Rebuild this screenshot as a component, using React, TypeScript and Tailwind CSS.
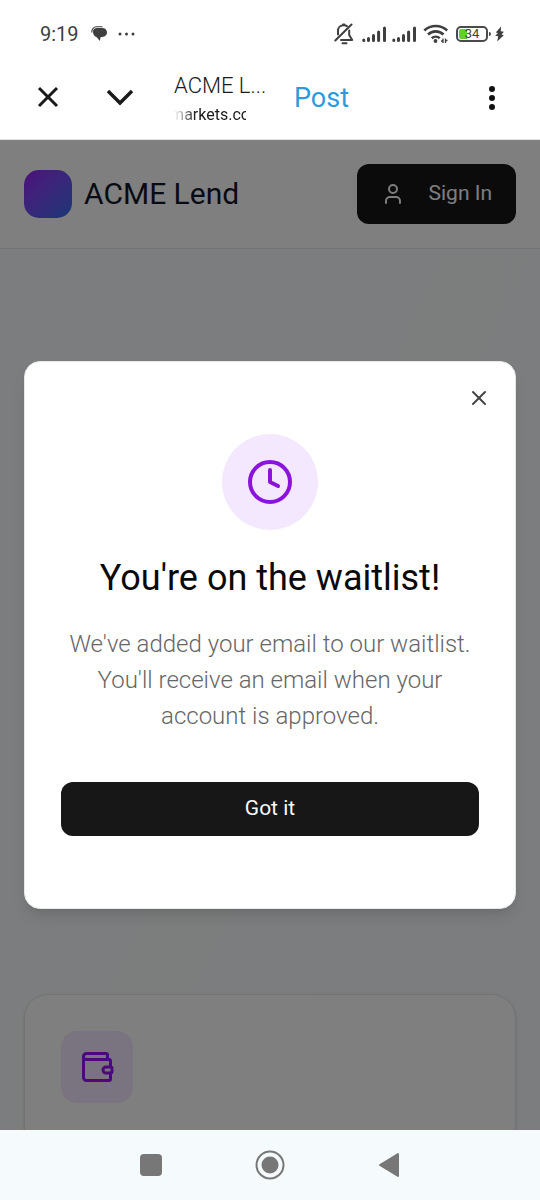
import { ChevronDown, Clock, User, Wallet, X } from 'lucide-react';

function SignalBars() {
  return (
    <svg width="25" height="16" viewBox="0 0 25 16" stroke="#3f3f3f" strokeWidth="3" strokeLinecap="round" aria-hidden="true">
      <path d="M1.8 14v.5M6.5 12.5v2M11.500 9.5v5M16.600 6v8.5M22.500 2v12.5" />
    </svg>
  );
}

function StatusBar() {
  return (
    <div className="flex h-[68px] items-center justify-between pl-10 pr-9 text-[#3f3f3f]">
      <div className="flex items-center">
        <span className="text-[20px] leading-6">9:19</span>
        <svg className="ml-3" width="17" height="16" viewBox="0 0 17 16" aria-hidden="true">
          <path d="M2 5.500C2 3.400 3.600 2 6 2h5.500a4.500 4.500 0 0 1 4.500 4.500c0 2.500-1.700 4.300-4.700 4.600H9.600L8.800 15 5.800 11.200C3.500 10.600 2 8.500 2 6z" fill="#3f3f3f" />
          <path d="M.7 6.500C.7 2.800 2.800.8 5.500.8h6" fill="none" stroke="#3f3f3f" strokeWidth="1.1" />
        </svg>
        <svg className="ml-2.5" width="17" height="4" viewBox="0 0 17 4" fill="#3f3f3f" aria-hidden="true">
          <circle cx="2" cy="2" r="1.5" /><circle cx="8.5" cy="2" r="1.5" /><circle cx="15" cy="2" r="1.5" />
        </svg>
      </div>
      <div className="flex items-center">
        <svg width="20" height="22" viewBox="0 0 20 22" fill="none" stroke="#3f3f3f" strokeWidth="2" strokeLinecap="round" strokeLinejoin="round" aria-hidden="true">
          <path d="M1.300 17.500 17.500 1.500" />
          <path d="M4 11.500V8a5.500 5.500 0 0 1 5-5.700V1.500h1.300v.8c1 .1 1.800.4 2.600.9" />
          <path d="M15.200 7.500v4.500l3 5H7" />
          <path d="M8.500 20.200h4" />
        </svg>
        <div className="ml-2 flex gap-[5px]">
          <SignalBars />
          <SignalBars />
        </div>
        <svg className="ml-1.5" width="26" height="20" viewBox="0 0 26 20" fill="none" stroke="#3f3f3f" strokeWidth="2.6" aria-hidden="true">
          <path d="M1.300 6.500C7.800.5 17.700.5 24.200 6.500M5 10.500c4.400-4.200 11-4.200 15.500 0M8.800 14.300c2.200-2.100 5.600-2.100 7.900 0" />
          <circle cx="12.500" cy="17" r="1.900" fill="#3f3f3f" stroke="none" />
          <path d="M20 19v-4.500M22.500 14.500V19M18 17h2M22.500 16.500h2" strokeWidth="1.300" />
        </svg>
        <div className="relative ml-[7px] h-4 w-8 rounded-[5px] border-2 border-[#4a4a4a] p-px">
          <div className="h-full w-2 rounded-l-[2px] bg-[#62d02a]" />
          <span className="absolute inset-0 text-center text-[13px] leading-3">34</span>
        </div>
        <div className="ml-px h-1 w-0.5 rounded-r bg-[#4a4a4a]" />
        <svg className="ml-1" width="9" height="16" viewBox="0 0 9 16" fill="#3f3f3f" aria-hidden="true">
          <path d="M6 .5.800 6.500 3 7 .200 9.800l3 .4L2.200 15.500 8.800 9.200 6.500 8.600 8.900 5.800 5.800 5.300z" />
        </svg>
      </div>
    </div>
  );
}

function BrowserBar() {
  return (
    <div className="flex h-[72px] items-start border-b border-[#dfe3e3] pl-[30px] pr-8 text-[#1a1a1a]">
      <button aria-label="Close tab" className="mt-[11px]">
        <X size={36} strokeWidth={2} strokeLinecap="butt" />
      </button>
      <button aria-label="Minimize" className="ml-[30px] mt-[5px]">
        <ChevronDown size={48} strokeWidth={1.75} strokeLinecap="butt" strokeLinejoin="miter" />
      </button>
      <div className="ml-[30px] w-24 shrink-0 pt-1">
        <p className="whitespace-nowrap text-[22px] font-light leading-7">ACME L...</p>
        <div className="flex w-[72px] justify-center overflow-hidden whitespace-nowrap text-[16px] leading-[30px] mask-l-from-70% mask-l-to-100%">
          <span>markets.co</span>
        </div>
      </div>
      <button className="ml-6 mt-[14px] text-[27px] leading-8 text-[#2b9be0]">Post</button>
      <button aria-label="More options" className="ml-auto mt-[17px] px-3">
        <svg width="8" height="26" viewBox="0 0 8 26" fill="#111">
          <circle cx="4" cy="4" r="3" /><circle cx="4" cy="13" r="3" /><circle cx="4" cy="22" r="3" />
        </svg>
      </button>
    </div>
  );
}

function Page() {
  return (
    <div className="bg-gradient-to-br from-slate-50 via-gray-50 to-slate-50">
      <header className="flex items-center justify-between border-b border-[#e5e7eb] bg-white p-6">
        <div className="flex items-center gap-3">
          <div className="size-12 rounded-[15px] bg-gradient-to-br from-[#9810fa] to-[#2b6cee]" />
          <span className="text-[30px] leading-9 text-[#0f172a]">ACME Lend</span>
        </div>
        <button className="flex h-[60px] items-center gap-6 rounded-xl bg-[#171717] px-6 text-[21px] text-[#fafafa]">
          <User size={24} strokeWidth={2} />
          Sign In
        </button>
      </header>
      <section className="px-6 pt-[745px]">
        <div className="h-80 rounded-3xl border border-gray-200 bg-white p-9 shadow-sm">
          <div className="flex size-[72px] items-center justify-center rounded-2xl bg-[#f3e8ff]">
            <Wallet size={36} className="text-[#9810fa]" />
          </div>
        </div>
      </section>
    </div>
  );
}

function WaitlistDialog() {
  return (
    <div className="absolute inset-0 flex items-center bg-black/50 px-6">
      <div role="dialog" aria-labelledby="waitlist-title" className="relative flex w-full flex-col items-center rounded-2xl border border-gray-200 bg-white px-9 py-[72px] shadow-lg">
        <button aria-label="Close" className="absolute right-6 top-6 text-[#444]"><X size={24} strokeWidth={2} /></button>
        <div className="flex size-24 items-center justify-center rounded-full bg-[#f3e8ff]">
          <Clock size={48} className="text-[#8b13dd]" />
        </div>
        <h2 id="waitlist-title" className="mt-6 text-[36px] leading-12 text-[#0a0a0a]">You're on the waitlist!</h2>
        <p className="mt-6 text-center text-[24px] font-light leading-9 text-[#666]">
          We've added your email to our waitlist.<br />
          You'll receive an email when your<br />
          account is approved.
        </p>
        <button className="mt-12 h-[54px] w-full rounded-xl bg-[#171717] text-[21px] text-[#fafafa]">Got it</button>
      </div>
    </div>
  );
}

function NavBar() {
  return (
    <nav className="flex h-[70px] shrink-0 items-center justify-center gap-[92px] bg-[#f5fbfc]">
      <button aria-label="Recent apps" className="p-px"><div className="size-[22px] rounded bg-[#777]" /></button>
      <button aria-label="Home">
        <svg width="30" height="30" viewBox="0 0 30 30" fill="#777">
          <circle cx="15" cy="15" r="13.5" fill="none" stroke="#777" strokeWidth="2" />
          <circle cx="15" cy="15" r="8.5" />
        </svg>
      </button>
      <button aria-label="Back">
        <svg width="24" height="26" viewBox="0 0 24 26" fill="#777" stroke="#777" strokeWidth="2" strokeLinejoin="round">
          <path d="M3 13 21 2v22z" />
        </svg>
      </button>
    </nav>
  );
}

export default function App() {
  return (
    <div className="flex h-screen flex-col bg-white font-[Roboto,sans-serif]">
      <div className="shrink-0">
        <StatusBar />
        <BrowserBar />
      </div>
      <main className="relative min-h-0 flex-1 overflow-hidden">
        <Page />
        <WaitlistDialog />
      </main>
      <NavBar />
    </div>
  );
}
